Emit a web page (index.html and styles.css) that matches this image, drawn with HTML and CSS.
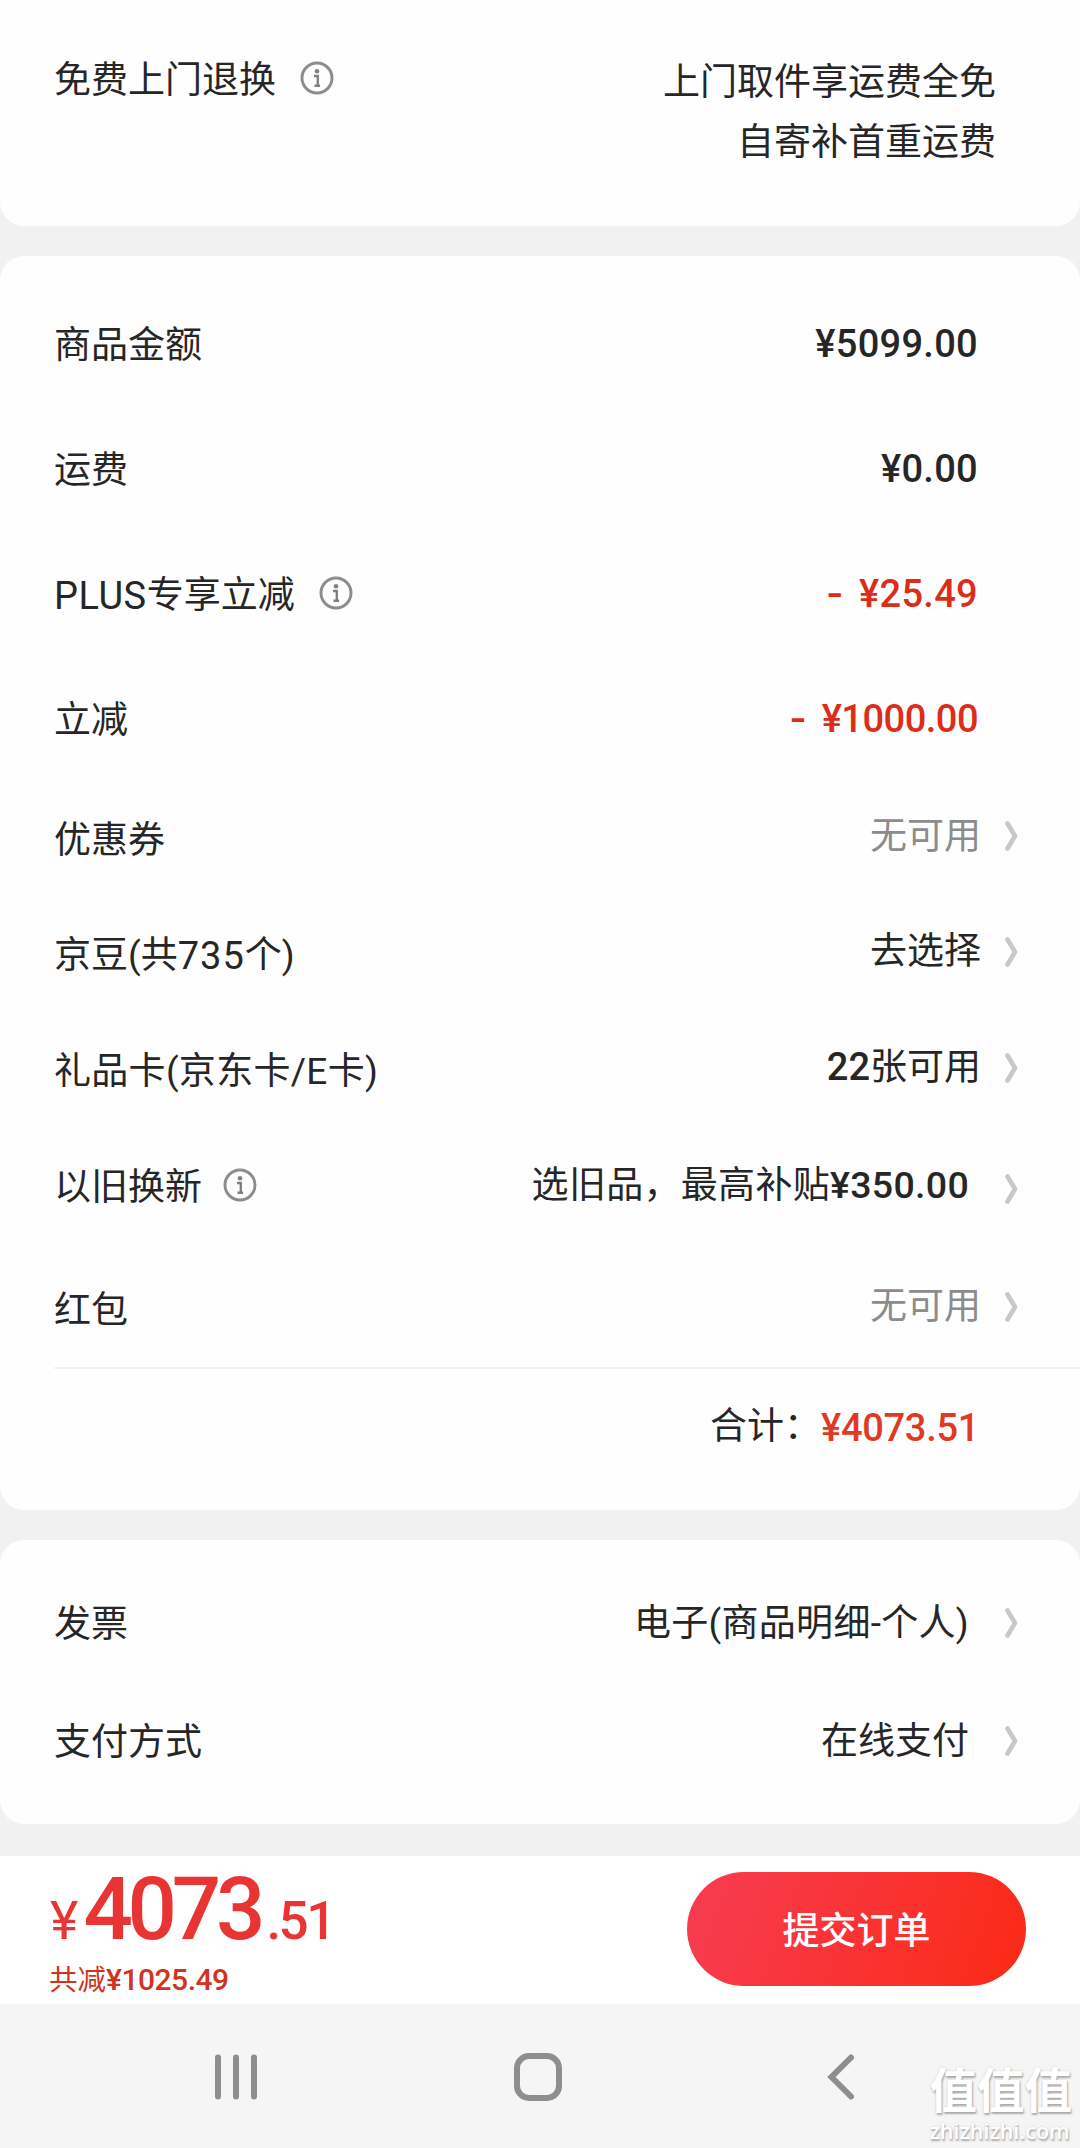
FILE: index.html
```html
<!DOCTYPE html>
<html lang="zh-CN">
<head>
<meta charset="utf-8">
<title>填写订单</title>
<link rel="stylesheet" href="styles.css">
</head>
<body>
<svg class="sprite" aria-hidden="true">
  <symbol id="info" viewBox="0 0 34 34">
    <circle cx="17" cy="17" r="15" fill="none" stroke="#8c8c8c" stroke-width="2.900"/>
    <circle cx="17" cy="10.200" r="2.300" fill="#808080"/>
    <path d="M14 15h3.800v9.500M14.500 24.700h5.500" fill="none" stroke="#808080" stroke-width="2.400"/>
  </symbol>
  <symbol id="chevron" viewBox="0 0 13 30">
    <path d="M2.500 2.500L10 15L2.500 27.500" fill="none" stroke="#c8c8c8" stroke-width="4.600" stroke-linecap="round" stroke-linejoin="round"/>
  </symbol>
</svg>
<main class="page">
  <section class="card card-return">
    <div class="label">免费上门退换<svg class="info"><use href="#info"/></svg></div>
    <div class="return-text">上门取件享运费全免<br>自寄补首重运费</div>
  </section>

  <section class="card card-amount">
    <div class="row"><div class="label">商品金额</div><div class="price">¥5099.00</div></div>
    <div class="row"><div class="label">运费</div><div class="price">¥0.00</div></div>
    <div class="row"><div class="label"><span class="latin">PLUS</span>专享立减<svg class="info"><use href="#info"/></svg></div><div class="price red"><span class="minus">-</span>¥25.49</div></div>
    <div class="row"><div class="label">立减</div><div class="price red tight"><span class="minus">-</span>¥1000.00</div></div>
    <div class="row link coupon"><div class="label">优惠券</div><div class="value muted">无可用<svg class="chevron"><use href="#chevron"/></svg></div></div>
    <div class="row link"><div class="label">京豆(共<span class="digits">735</span>个)</div><div class="value">去选择<svg class="chevron"><use href="#chevron"/></svg></div></div>
    <div class="row link"><div class="label spaced">礼品卡(京东卡/E卡)</div><div class="value"><span><b class="count">22</b>张可用</span><svg class="chevron"><use href="#chevron"/></svg></div></div>
    <div class="row link trade"><div class="label">以旧换新<svg class="info"><use href="#info"/></svg></div><div class="value wide"><span class="trade-text spaced">选旧品，最高补贴<b>¥350.00</b></span><svg class="chevron"><use href="#chevron"/></svg></div></div>
    <div class="row link packet"><div class="label">红包</div><div class="value muted">无可用<svg class="chevron"><use href="#chevron"/></svg></div></div>
    <div class="total"><span class="total-label">合计：</span><span class="total-price">¥4073.51</span></div>
  </section>

  <section class="card card-pay">
    <div class="row link"><div class="label">发票</div><div class="value wide spaced">电子(商品明细-个人)<svg class="chevron"><use href="#chevron"/></svg></div></div>
    <div class="row link"><div class="label">支付方式</div><div class="value wide">在线支付<svg class="chevron"><use href="#chevron"/></svg></div></div>
  </section>

  <footer class="submit-bar">
    <div class="sum">
      <div class="sum-price"><span class="yen">¥</span><span class="int">4073</span><span class="dec">.51</span></div>
      <div class="sum-saved">共减<b>¥1025.49</b></div>
    </div>
    <button class="submit" type="button">提交订单</button>
  </footer>

  <nav class="system-nav">
    <svg class="nav-icon" viewBox="0 0 60 60"><path d="M12 10.500v39M30 10.500v39M48 10.500v39" stroke="#8e8e8e" stroke-width="6" stroke-linecap="round"/></svg>
    <svg class="nav-icon" viewBox="0 0 60 60"><rect x="9" y="9" width="42" height="42" rx="12" fill="none" stroke="#8e8e8e" stroke-width="6"/></svg>
    <svg class="nav-icon" viewBox="0 0 60 60"><path d="M41 10.500L21.500 30L41 49.500" fill="none" stroke="#8e8e8e" stroke-width="6" stroke-linecap="round"/></svg>
    <div class="watermark"><span class="mark-name">值值值</span><span class="mark-site">zhizhizhi.com</span></div>
  </nav>
</main>
</body>
</html>
```
FILE: styles.css
```css
* { box-sizing: border-box; }

body {
  margin: 0;
  background: #f1f1f1;
  color: #262626;
  font: 37px/60px Roboto, "Noto Sans CJK SC", sans-serif;
}

.sprite { display: none; }

.page {
  width: 1080px;
  height: 2148px;
  display: flex;
  flex-direction: column;
  overflow: hidden;
}

.card {
  background: #fefefe;
  border-radius: 24px;
  margin-bottom: 30px;
  flex: none;
}

.card-return {
  height: 226px;
  padding: 51px 84px 0 54px;
  border-radius: 0 0 24px 24px;
  display: flex;
  justify-content: space-between;
  align-items: flex-start;
}

.return-text { padding-top: 2px; text-align: right; }

.label { display: flex; align-items: center; white-space: pre; padding-top: 1px; }
.card-return .label { padding-top: 0; }
.latin { font-size: 38px; letter-spacing: 0.500px; }
.digits { font-size: 38px; letter-spacing: 1px; }
.spaced { letter-spacing: 0.300px; }

.info { width: 34px; height: 34px; margin: 0 0 6px 24px; }
.chevron { width: 13px; height: 30px; flex: none; }

.card-amount { height: 1254px; padding-top: 27px; }

.row {
  height: 125px;
  padding: 0 102px 0 54px;
  display: flex;
  align-items: center;
  justify-content: space-between;
}

.link { height: 116px; padding-right: 62px; }
.coupon { height: 114px; }
.packet { height: 122px; padding-top: 8px; }

.price {
  display: flex;
  padding-bottom: 3px;
  font-size: 38px;
  font-weight: 500;
  letter-spacing: 0.300px;
}
.tight { letter-spacing: -0.500px; }
.minus {
  margin-right: 16px;
  transform: scaleX(1.250);
  transform-origin: right;
}
.red { color: #dc2c1a; }

.value { display: flex; align-items: center; gap: 24px; padding-bottom: 7px; }
.value b { font-weight: 500; }
.wide { gap: 36px; padding-bottom: 0; }
.muted { color: #8c8c8c; }
.count { font-size: 38px; }

.coupon .chevron { margin-bottom: 1px; }
.trade .chevron { margin-top: 4px; }
.trade-text { padding-bottom: 3px; }
.trade-text b { font-size: 37.500px; letter-spacing: 0.300px; }
.trade .info { margin-left: 21px; }

.total {
  height: 117px;
  margin-left: 54px;
  padding-right: 101px;
  border-top: 2px solid #f2f2f2;
  display: flex;
  align-items: center;
  justify-content: flex-end;
}
.total-price {
  color: #e03a26;
  font-weight: 500;
  font-size: 38px;
  letter-spacing: -0.300px;
  padding-top: 2px;
}

.card-pay { height: 284px; padding-top: 25px; margin-bottom: 32px; }
.card-pay .row { height: 118px; }
.card-pay .chevron { margin-bottom: 2px; }

.submit-bar {
  height: 148px;
  flex: none;
  padding: 0 54px 2px 49px;
  background: #fff;
  display: flex;
  align-items: center;
  justify-content: space-between;
}

.sum { display: flex; flex-direction: column; padding-top: 6px; }
.sum-price {
  display: flex;
  align-items: baseline;
  height: 90px;
  line-height: 90px;
  color: #e93434;
}
.yen { font-size: 54px; font-weight: 400; margin: 0 5px 0 1px; }
.int { font-size: 87px; font-weight: 500; letter-spacing: -5.200px; }
.dec { font-size: 53px; font-weight: 500; letter-spacing: -2.500px; margin-left: 6px; }
.sum-saved { color: #d03420; font-size: 28.500px; line-height: 40px; margin-top: 6px; }
.sum-saved b { font-size: 30px; font-weight: 500; letter-spacing: -0.500px; }

.submit {
  width: 339px;
  height: 114px;
  border: 0;
  border-radius: 57px;
  padding: 0 0 2px;
  background: linear-gradient(110deg, #f73b4e 8%, #fb2b1a 92%);
  color: #fff;
  font: 500 37px/60px "Noto Sans CJK SC", sans-serif;
}

.system-nav {
  position: relative;
  height: 144px;
  flex: none;
  padding: 2px 210px 0 206px;
  background: #f5f5f5;
  display: flex;
  align-items: center;
  justify-content: space-between;
}
.nav-icon { width: 60px; height: 60px; }

.watermark {
  position: absolute;
  right: 8px;
  bottom: 4px;
  display: flex;
  flex-direction: column;
  color: #fff;
  text-shadow: 1px 2px 2px #aaa, 0 0 2px #ccc;
}
.mark-name { font: 700 47.500px/58px "Noto Sans CJK SC", sans-serif; }
.mark-site { font: 600 21.500px/27px "Open Sans", sans-serif; }
```
